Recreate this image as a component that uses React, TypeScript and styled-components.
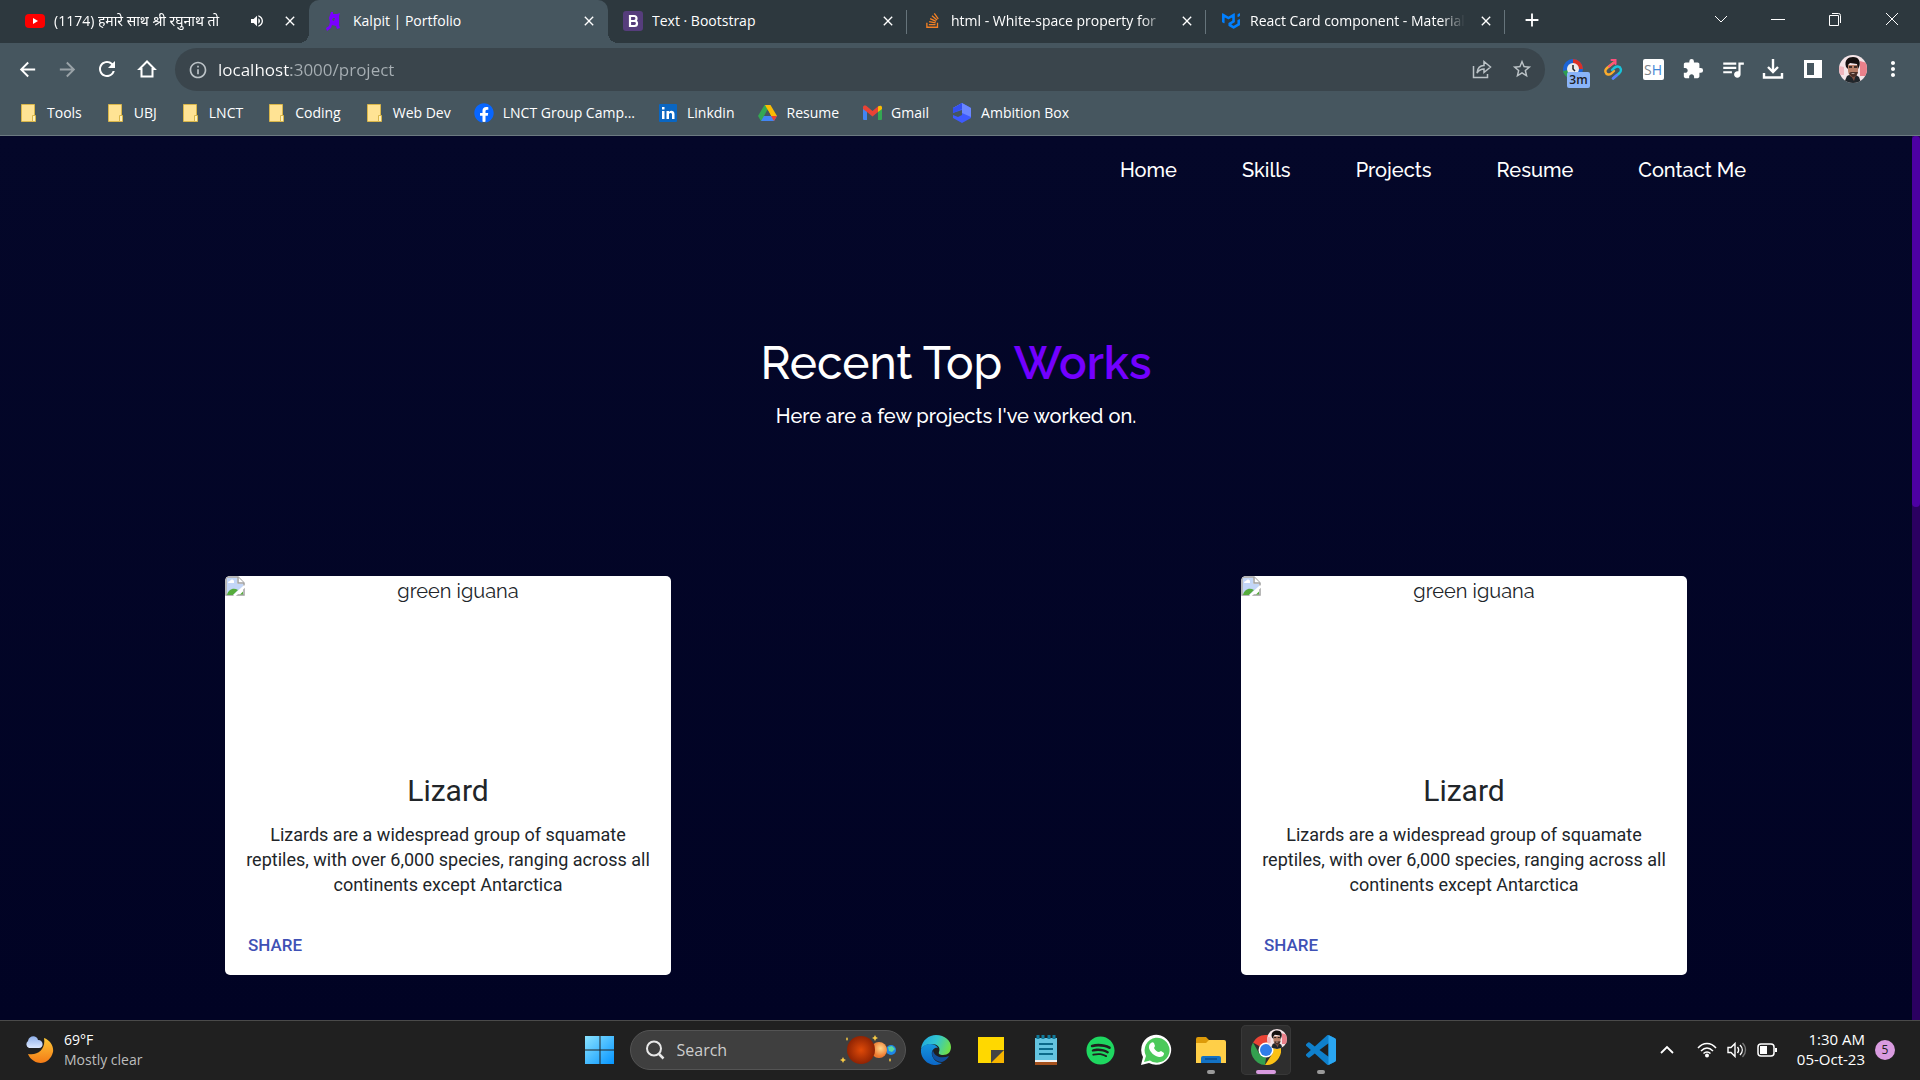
import React from "react";
import styled, { createGlobalStyle, css } from "styled-components";
import {
  MdArrowBack,
  MdArrowForward,
  MdRefresh,
  MdInfoOutline,
  MdStarBorder,
  MdExtension,
  MdQueueMusic,
  MdMoreVert,
  MdClose,
  MdAdd,
  MdVolumeUp,
} from "react-icons/md";
import { FaStackOverflow, FaFacebook, FaSpotify } from "react-icons/fa";
import { SiMui } from "react-icons/si";

const uiFont = `"Segoe UI", "Open Sans", "Noto Sans", sans-serif`;
const siteFont = `Raleway, Lato, "Open Sans", sans-serif`;
const cardFont = `Roboto, "Liberation Sans", sans-serif`;

const GlobalStyle = createGlobalStyle`
  *, *::before, *::after { box-sizing: border-box; }
  body { margin: 0; background: #030627; }
  h1, h2, p { margin: 0; font-weight: 400; }
  button { border: 0; padding: 0; background: none; color: inherit; font: inherit; cursor: pointer; }
  a { color: inherit; text-decoration: none; }
  svg { display: block; flex: none; }
`;

const Screen = styled.div`
  display: flex;
  flex-direction: column;
  height: 100vh;
  overflow: hidden;
  font-family: ${uiFont};
  font-size: 14px;
  color: #fff;
`;

/* ---------- browser chrome ---------- */

const TabStrip = styled.header`
  display: flex;
  height: 43px;
  flex: none;
  padding-left: 10px;
  background: #2d383e;
`;

const Tab = styled.div<{ $active?: boolean; $divider?: boolean }>`
  position: relative;
  display: flex;
  align-items: center;
  flex: 0 1 299px;
  min-width: 0;
  padding: 0 9px 2px 14px;
  ${(p) =>
    p.$divider &&
    css`
      background: linear-gradient(#66747b, #66747b) right center / 1px 24px no-repeat;
    `}
  ${(p) =>
    p.$active &&
    css`
      background: #46565f;
      border-radius: 10px 10px 0 0;
      &::before,
      &::after {
        content: "";
        position: absolute;
        bottom: 0;
        width: 10px;
        height: 10px;
      }
      &::before {
        right: 100%;
        background: radial-gradient(circle at 0 0, transparent 10px, #46565f 10px);
      }
      &::after {
        left: 100%;
        background: radial-gradient(circle at 100% 0, transparent 10px, #46565f 10px);
      }
    `}
`;

const Favicon = styled.span`
  display: grid;
  place-items: center;
  flex: none;
  width: 22px;
  height: 22px;
  margin-right: 8px;
`;

const TabTitle = styled.span<{ $fade?: boolean }>`
  flex: 1;
  min-width: 0;
  overflow: hidden;
  white-space: nowrap;
  line-height: 24px;
  ${(p) =>
    p.$fade &&
    css`
      mask-image: linear-gradient(90deg, #000 calc(100% - 24px), transparent);
    `}
`;

const TabAudio = styled.span`
  display: grid;
  place-items: center;
  width: 24px;
  margin-left: 4px;
`;

const SmallButton = styled.button`
  display: grid;
  place-items: center;
  flex: none;
  width: 20px;
  height: 20px;
  margin-left: 11px;
`;

const NewTab = styled.button`
  display: grid;
  place-items: center;
  width: 40px;
  height: 40px;
  margin-left: 7px;
`;

const WindowControls = styled.div`
  display: flex;
  margin-left: auto;
`;

const WindowButton = styled.button`
  display: grid;
  place-items: center;
  width: 57px;
  height: 37px;
`;

const Toolbar = styled.div`
  display: flex;
  align-items: center;
  flex: none;
  height: 53px;
  padding: 0 7px 0 7px;
  background: #46565f;
`;

const ToolButton = styled.button<{ $dim?: boolean }>`
  position: relative;
  display: grid;
  place-items: center;
  width: 40px;
  height: 40px;
  padding-bottom: 1px;
  opacity: ${(p) => (p.$dim ? 0.45 : 1)};
`;

const Badge = styled.span`
  position: absolute;
  left: 14px;
  top: 22px;
  width: 23px;
  height: 16px;
  border-radius: 2px;
  background: #8ab4f8;
  color: #202124;
  font-size: 12px;
  font-weight: 600;
  line-height: 16px;
  text-align: center;
`;

const Omnibox = styled.div`
  display: flex;
  align-items: center;
  flex: 1;
  height: 43px;
  margin: 0 8px;
  padding: 0 3px 0 13px;
  border-radius: 22px;
  background: #3a454c;
  color: #bcc3c7;
`;

const Address = styled.input`
  flex: 1;
  min-width: 0;
  margin-left: 10px;
  padding: 0;
  border: 0;
  outline: 0;
  color: #fff;
  font: 17px/24px ${uiFont};
  background: linear-gradient(90deg, #fff 73px, #a7afb4 73px);
  background-clip: text;
  -webkit-background-clip: text;
  -webkit-text-fill-color: transparent;
`;

const BookmarkBar = styled.nav`
  display: flex;
  align-items: center;
  gap: 23px;
  flex: none;
  height: 40px;
  padding: 0 18px 5px;
  border-bottom: 1px solid #6c7a81;
  background: #46565f;
`;

const Bookmark = styled.a`
  display: flex;
  align-items: center;
  white-space: nowrap;
  line-height: 20px;
`;

const BookmarkIcon = styled.span`
  display: grid;
  place-items: center;
  width: 20px;
  height: 20px;
  margin-right: 9px;
`;

/* ---------- portfolio page ---------- */

const Viewport = styled.div`
  display: flex;
  flex: 1;
  min-height: 0;
  background: linear-gradient(#040729, #010324);
`;

const Page = styled.main`
  flex: 1;
  min-width: 0;
  overflow: hidden;
  font-family: ${siteFont};
`;

const ScrollTrack = styled.div`
  width: 8px;
  background: #2b0060;
`;

const ScrollThumb = styled.div`
  height: 42%;
  border-radius: 4px;
  background: #4d00a3;
`;

const SiteNav = styled.nav`
  display: flex;
  justify-content: flex-end;
  gap: 65px;
  padding: 18px 166px 0 0;
  font-size: 20px;
  font-weight: 500;
  line-height: 32px;
`;

const Intro = styled.section`
  padding-top: 148px;
  text-align: center;
`;

const Heading = styled.h1`
  font-size: 46px;
  font-weight: 500;
  line-height: 58px;
`;

const Accent = styled.strong`
  color: #7300ff;
  font-weight: 600;
`;

const Subtitle = styled.p`
  margin-top: 9px;
  font-size: 20px;
  font-weight: 500;
  line-height: 30px;
`;

const Cards = styled.section`
  display: flex;
  justify-content: space-between;
  padding: 145px 225px 0;
`;

const Card = styled.article`
  width: 446px;
  border-radius: 5px;
  overflow: hidden;
  background: #fff;
  color: #212529;
  font-family: ${cardFont};
`;

const Media = styled.div`
  display: flex;
  height: 175px;
  font: 20px/30px ${siteFont};
`;

const MediaAlt = styled.span`
  flex: 1;
  text-align: center;
`;

const CardBody = styled.div`
  padding: 20px 20px 0;
  text-align: center;
`;

const CardTitle = styled.h2`
  font-size: 30px;
  line-height: 40px;
`;

const CardText = styled.p`
  margin-top: 11px;
  font-size: 18px;
  line-height: 25px;
`;

const CardActions = styled.div`
  display: flex;
  padding: 30px 17px 12px;
`;

const ShareButton = styled.button`
  height: 36px;
  padding: 0 6px;
  color: #3f51b5;
  font-size: 17px;
  font-weight: 500;
`;

/* ---------- taskbar ---------- */

const Taskbar = styled.footer`
  display: grid;
  grid-template-columns: 1fr auto 1fr;
  align-items: center;
  flex: none;
  height: 60px;
  padding-bottom: 1px;
  border-top: 1px solid #4a4a4a;
  background: #202020;
`;

const Weather = styled.button`
  display: flex;
  align-items: center;
  gap: 10px;
  justify-self: start;
  padding: 0 0 1px 24px;
  text-align: left;
  line-height: 20px;
`;

const Muted = styled.span`
  display: block;
  color: #bdbdbd;
`;

const AppRow = styled.div`
  display: flex;
  align-items: center;
  gap: 5px;
`;

const AppButton = styled.button<{ $active?: boolean }>`
  position: relative;
  display: grid;
  place-items: center;
  width: 50px;
  height: 50px;
  border-radius: 5px;
  ${(p) =>
    p.$active &&
    css`
      background: #2e2e2e;
      box-shadow: inset 0 0 0 1px #383838;
    `}
`;

const RunMark = styled.span<{ $active?: boolean }>`
  position: absolute;
  bottom: 1px;
  left: 50%;
  width: ${(p) => (p.$active ? 20 : 8)}px;
  height: 4px;
  border-radius: 2px;
  background: ${(p) => (p.$active ? "#d99be0" : "#9a9a9a")};
  transform: translateX(-50%);
`;

const AvatarBadge = styled.span`
  position: absolute;
  right: 4px;
  top: 4px;
`;

const SearchBox = styled.label`
  display: flex;
  align-items: center;
  width: 276px;
  height: 40px;
  padding: 0 8px 0 14px;
  border: 1px solid #545454;
  border-radius: 20px;
  background: #3f3f3f;
`;

const SearchInput = styled.input`
  flex: 1;
  min-width: 0;
  margin-left: 12px;
  padding: 0;
  border: 0;
  outline: 0;
  background: none;
  color: #fff;
  font: 16px/24px ${uiFont};
  &::placeholder {
    color: #cdcdcd;
    opacity: 1;
  }
`;

const Tray = styled.div`
  display: flex;
  align-items: center;
  justify-self: end;
  padding-right: 25px;
`;

const TrayIcon = styled.button<{ $wide?: boolean }>`
  display: grid;
  place-items: center;
  width: ${(p) => (p.$wide ? 50 : 30)}px;
  height: 40px;
`;

const Clock = styled.div`
  min-width: 83px;
  padding-bottom: 2px;
  text-align: right;
  font-size: 15px;
  line-height: 20px;
`;

const Count = styled.span`
  width: 20px;
  height: 20px;
  margin-left: 10px;
  border-radius: 50%;
  background: #d99be0;
  color: #202020;
  font-size: 12px;
  line-height: 20px;
  text-align: center;
`;

/* ---------- drawings ---------- */

const YouTubeIcon = () => (
  <svg width="20" height="20" viewBox="0 0 20 20">
    <rect y="3" width="20" height="14" rx="4" fill="#f00" />
    <path d="M8 7v6l5-3z" fill="#fff" />
  </svg>
);
const KalpitIcon = () => (
  <svg width="16" height="20" viewBox="0 0 16 20">
    <path d="M5 1h2v2h4l3-1-1 3v9l1 3-3 1-1-3-4-1-1 3-4 3-1-3 3-2 1-4-1-4z" fill="#7a00ff" />
    <path d="M7 7h2l-1 3-2-1z" fill="#46565f" />
  </svg>
);
const BootstrapIcon = () => (
  <svg width="20" height="20" viewBox="0 0 20 20">
    <rect width="20" height="20" rx="3" fill="#563d7c" />
    <path d="M7 5h4a2 2 0 0 1 0 5H7zM7 10h4.500a2.500 2.500 0 0 1 0 5H7z" fill="none" stroke="#fff" strokeWidth="2.200" />
  </svg>
);
const HomeIcon = () => (
  <svg width="20" height="20" viewBox="0 0 20 20" fill="none" stroke="#fff" strokeWidth="2">
    <path d="M4.500 17.500V10H2.500L10 2.500l7.500 7.500h-2v7.500z" />
  </svg>
);
const ShareIcon = () => (
  <svg width="20" height="20" viewBox="0 0 20 20" fill="none" stroke="#bcc3c7" strokeWidth="1.500">
    <path d="M1.500 7v11.500h14V15M5 14c.5-5 3-7.500 7-7.500V2.500L18.500 8 12 13.500V10c-3 0-5 1-7 4z" />
  </svg>
);
const TimerIcon = () => (
  <svg width="20" height="20" viewBox="0 0 20 20">
    <circle cx="10" cy="10" r="10" fill="#1b64d8" />
    <path d="M10 0a10 10 0 0 1 10 10H10z" fill="#d93025" />
    <path d="M0 12l10-2v10A10 10 0 0 1 0 12z" fill="#2e9e4f" />
    <circle cx="10" cy="10" r="6" fill="#e8eaed" />
    <path d="M10 6v4l2 2" stroke="#222" strokeWidth="1.500" fill="none" />
  </svg>
);
const LoopIcon = () => (
  <svg width="20" height="22" viewBox="0 0 20 22" fill="none" strokeWidth="2.400" strokeLinecap="round">
    <path d="M11 4.500L4 10c-3 2.500-1.500 6 1 6.500 2 .5 3-.5 6-3.500" stroke="#fbab2c" />
    <path d="M6 8.500l5-4M8.500 2h4v4" stroke="#ff4f7d" strokeWidth="2" />
    <path d="M9 12c3-3 4-4 6-3.500 3 .5 4 4 1.500 6.500L10 20.500" stroke="#19c3d9" />
    <path d="M14 17l-4 3.500" stroke="#5b7cff" />
  </svg>
);
const ShIcon = styled.span`
  width: 21px;
  height: 21px;
  border-radius: 2px;
  background: #fff;
  color: #80868b;
  font-size: 14px;
  line-height: 21px;
  text-align: center;
  b {
    color: #3f87d6;
    font-weight: 400;
  }
`;
const DownloadIcon = () => (
  <svg width="22" height="22" viewBox="0 0 22 22" fill="none" stroke="#fff" strokeWidth="2.400">
    <path d="M11 1v12M6 9l5 5 5-5M2 15v4.500h18V15" />
  </svg>
);
const PanelIcon = () => (
  <svg width="18" height="18" viewBox="0 0 18 18">
    <path d="M0 0h18v18H0zM3 3v12h7V3z" fill="#fff" fillRule="evenodd" />
  </svg>
);
const Avatar = ({ size }: { size: number }) => (
  <svg width={size} height={size} viewBox="0 0 28 28">
    <defs>
      <clipPath id={`face${size}`}>
        <circle cx="14" cy="14" r="14" />
      </clipPath>
    </defs>
    <g clipPath={`url(#face${size})`}>
      <path d="M0 0h28v28H0z" fill="#f4e4e7" />
      <path d="M21 6l7 2v13h-7z" fill="#ea808a" />
      <path d="M0 11l5 1v8H0z" fill="#f0b6bd" />
      <path d="M5 28l3-7 6-3 6 4 2 6z" fill="#20262b" />
      <path d="M11 19h6l-2 7z" fill="#7e5040" />
      <path d="M9 10h10v5c0 4-2 7-5 7s-5-3-5-7z" fill="#b98068" />
      <path d="M7 12C5 5 9 2 14 2c6 0 8 5 6 10l-1 2-1-5-7-1-2 2v4z" fill="#15100f" />
      <path d="M10 18l2-1h5l2 0c-1 3-2 5-5 5-2 0-3-2-4-4z" fill="#4a3028" />
      <path d="M12 18c1 1 3 1 4 0z" fill="#f3e3dc" />
      <path d="M10 12h3m2 0h3" stroke="#1b1413" strokeWidth="1.300" />
    </g>
  </svg>
);
const FolderIcon = () => (
  <svg width="16" height="20" viewBox="0 0 16 20">
    <path d="M1.500 1.500h13v17h-13z" fill="#ffe394" stroke="#d9b64a" />
    <path d="M12.500 12.500h3v6h-3z" fill="#fff0b8" stroke="#d9b64a" />
  </svg>
);
const FacebookIcon = () => (
  <svg width="20" height="20" viewBox="0 0 20 20">
    <circle cx="10" cy="10" r="9" fill="#fff" />
    <FaFacebook size={20} color="#0866ff" />
  </svg>
);
const LinkedInIcon = () => (
  <svg width="18" height="18" viewBox="0 0 18 18">
    <rect width="18" height="18" rx="1" fill="#0a66c2" />
    <path d="M3 7h2.500v8H3zM3 3h2.500v2.500H3zM7.500 7H10v1c1.500-2 5.500-1.500 5.500 2v5H13v-4.500c0-2-3-2-3 0V15H7.500z" fill="#fff" />
  </svg>
);
const DriveIcon = () => (
  <svg width="19" height="18" viewBox="0 0 19 18">
    <path d="M6.500 1h3l2.500 4.500L4 17H3l-3-5z" fill="#34a853" />
    <path d="M7 1h5.500L19 12h-6z" fill="#fbbc04" />
    <path d="M9.500 5.500L13 12H6z" fill="#46565f" />
    <path d="M6 12h13l-3 5H3z" fill="#4285f4" />
    <path d="M13 12h6l-3 5z" fill="#ea4335" />
  </svg>
);
const GmailIcon = () => (
  <svg width="19" height="16" viewBox="0 0 19 16">
    <path d="M0 3h4v12H1a1 1 0 0 1-1-1z" fill="#4285f4" />
    <path d="M15 3h4v11a1 1 0 0 1-1 1h-3z" fill="#34a853" />
    <path d="M0 2.500C0 .5 2 0 3.500 1l6 5 6-5L15 7l-5.500 4.500L4 7 0 4z" fill="#ea4335" />
    <path d="M15 1.500C17 0 19 .5 19 2.500V4l-4 3z" fill="#fbbc04" />
  </svg>
);
const AmbitionIcon = () => (
  <svg width="18" height="20" viewBox="0 0 18 20">
    <path d="M9 0l9 5v10l-9 5-9-5v-3l5 2 4-2V7L0 10V5z" fill="#3d5afe" />
    <path d="M9 0l9 5v9l-9-4V6L0 9V5z" fill="#6a86ff" />
    <path d="M0 5l9-5v6L0 10z" fill="#3450f0" />
  </svg>
);
const BrokenImage = () => (
  <svg width="20" height="20" viewBox="0 0 20 20">
    <path d="M1 1h12l6 6v12H1z" fill="#fff" stroke="#a0a0a0" strokeWidth="1.500" />
    <path d="M2 2h10v6h6v3l-8 8H2z" fill="#c3d6f7" />
    <path d="M13 1v6h6" fill="#fff" stroke="#a0a0a0" strokeWidth="1.500" />
    <path d="M3 7a2 2 0 0 1 2-2 2 2 0 0 1 4 1v1z" fill="#fff" />
    <path d="M2 19c1-5 6-8 11-5l-5 5zM15 18.500l3-3v3z" fill="#56ac3c" />
    <path d="M9 20L20 10" stroke="#fff" strokeWidth="2.500" />
  </svg>
);
const WeatherIcon = () => (
  <svg width="30" height="30" viewBox="0 0 30 30">
    <defs>
      <linearGradient id="moon" x2="0" y2="1">
        <stop stopColor="#fcc737" />
        <stop offset="1" stopColor="#f47b16" />
      </linearGradient>
      <linearGradient id="cloud" x2="0" y2="1">
        <stop stopColor="#8fb0ea" />
        <stop offset="1" stopColor="#dce8ff" />
      </linearGradient>
    </defs>
    <path d="M20 3c6 2 10 8 9 14-2 9-11 14-19 9-3-2-5-4-6-7 10 2 18-5 16-16z" fill="url(#moon)" />
    <path d="M5 13a4 4 0 0 1-1-7c1-6 9-6 10-1 6 0 6 8 1 8z" fill="url(#cloud)" />
  </svg>
);
const WindowsIcon = () => (
  <svg width="30" height="30" viewBox="0 0 30 30">
    <defs>
      <linearGradient id="win" x2="1" y2="1">
        <stop stopColor="#8be3ff" />
        <stop offset="1" stopColor="#0595ff" />
      </linearGradient>
    </defs>
    <path d="M0 1h14.500v13.500H0zM15.500 1H29v13.500H15.500zM0 15.500h14.500V29H0zM15.500 15.500H29V29H15.500z" fill="url(#win)" />
  </svg>
);
const PlanetsIcon = () => (
  <svg width="58" height="30" viewBox="0 0 58 30">
    <defs>
      <radialGradient id="mars">
        <stop stopColor="#e04a08" />
        <stop offset="1" stopColor="#8f2303" />
      </radialGradient>
      <radialGradient id="venus" cx="0.6" cy="0.4">
        <stop stopColor="#ffd68a" />
        <stop offset="1" stopColor="#ee7a30" />
      </radialGradient>
    </defs>
    <circle cx="52" cy="15" r="5" fill="#1d87e8" />
    <path d="M49 12l4-1 3 3-3 3-3-1z" fill="#5bd8a0" />
    <circle cx="40" cy="15" r="8" fill="url(#venus)" />
    <circle cx="22" cy="15" r="14" fill="url(#mars)" />
    <path
      d="M4 22l1 2 2 1-2 1-1 2-1-2-2-1 2-1zM36 0l1 2 2 1-2 1-1 2-1-2-2-1 2-1zM8 2l1 2-1 2-1-2zM51 23l1 2-1 2-1-2z"
      fill="#f6c945"
    />
  </svg>
);
const EdgeIcon = () => (
  <svg width="30" height="30" viewBox="0 0 30 30">
    <defs>
      <linearGradient id="edgeTop" x1="0" x2="1" y1="0.2" y2="0.5">
        <stop stopColor="#1fa7e0" />
        <stop offset="0.5" stopColor="#32c6cf" />
        <stop offset="1" stopColor="#6fe04a" />
      </linearGradient>
      <linearGradient id="edgeLow" x2="0" y2="1">
        <stop stopColor="#1595dd" />
        <stop offset="1" stopColor="#0b67c8" />
      </linearGradient>
    </defs>
    <path d="M0 14C1 5 8 0 15 0c9 0 15 6 15 12 0 5-3 8-8 8-3 0-5-1-4-3 2-5-2-8-7-8C6 9 2 11 0 14z" fill="url(#edgeTop)" />
    <path d="M0 14c3-6 14-7 17-1-4-1-7 3-6 7 1 5 6 8 10 8-3 2-6 2-8 2C5 29-1 22 0 14z" fill="url(#edgeLow)" />
    <path d="M12 15c-3 6 2 12 9 12 3-1 6-4 7-6-7 3-15 1-16-6z" fill="#114f9c" />
  </svg>
);
const StickyIcon = () => (
  <svg width="28" height="28" viewBox="0 0 28 28">
    <path d="M1 1h26v13l-12 13H1z" fill="#ffd800" />
    <path d="M27 14v13H14z" fill="#f7b500" />
    <path d="M14 14h13L14 27z" fill="#444" />
  </svg>
);
const NotepadIcon = () => (
  <svg width="24" height="30" viewBox="0 0 24 30">
    <path d="M1 26h22v4H1z" fill="#a4511d" />
    <path d="M1 24h22v3H1z" fill="#f2f2f2" />
    <path d="M1 3h22v22H1z" fill="#64c4e0" />
    <path d="M4 0v4M9 0v4M15 0v4M20 0v4" stroke="#107a9b" strokeWidth="3" />
    <path d="M5 9h14M5 14h14M5 19h14" stroke="#0b6a8a" strokeWidth="2" />
  </svg>
);
const WhatsAppIcon = () => (
  <svg width="32" height="32" viewBox="0 0 32 32">
    <path d="M1 31l2-8A15 15 0 1 1 9 29z" fill="#fff" />
    <path d="M4 28l2-6A12.500 12.500 0 1 1 10 26.500z" fill="#4bc95a" />
    <path d="M11 9c1-1 2-1 3 0l1 3-1 2c1 2 3 4 5 4l2-1 3 2c0 3-2 4-5 4-5-1-9-5-10-9 0-2 0-4 2-5z" fill="#fff" />
  </svg>
);
const ExplorerIcon = () => (
  <svg width="30" height="28" viewBox="0 0 30 28">
    <path d="M0 3a2 2 0 0 1 2-2h8l3 3h15v8H0z" fill="#dd9a09" />
    <path d="M0 7h10l3-3h15a2 2 0 0 1 2 2v21H0z" fill="#ffcf48" />
    <path d="M5 27v-5a2 2 0 0 1 2-2h16a2 2 0 0 1 2 2v5z" fill="#1372c4" />
    <path d="M9 23h12" stroke="#0b4c8c" strokeWidth="1.500" />
  </svg>
);
const ChromeIcon = () => (
  <svg width="30" height="30" viewBox="0 0 30 30">
    <path d="M15 15L2 7.500A15 15 0 0 1 28 7.500z" fill="#ea4335" />
    <path d="M2 7.500L8.500 19l6.500 4-1 7A15 15 0 0 1 2 7.500z" fill="#34a04f" />
    <path d="M28 7.500A15 15 0 0 1 14 30l7.500-11.500V12L15 7.500z" fill="#fbc116" />
    <circle cx="15" cy="15" r="7.500" fill="#fff" />
    <circle cx="15" cy="15" r="6" fill="#2f7de9" />
  </svg>
);
const CodeIcon = () => (
  <svg width="30" height="30" viewBox="0 0 24 24">
    <path
      d="M23.150 2.587L18.210.21a1.494 1.494 0 0 0-1.705.29l-9.460 8.630-4.120-3.128a.999.999 0 0 0-1.276.057L.327 7.261A1 1 0 0 0 .326 8.740L3.899 12 .326 15.260a1 1 0 0 0 .001 1.479L1.650 17.940a.999.999 0 0 0 1.276.057l4.120-3.128 9.460 8.630a1.492 1.492 0 0 0 1.704.290l4.942-2.377A1.500 1.500 0 0 0 24 20.060V3.939a1.500 1.500 0 0 0-.85-1.352zm-5.146 14.861L10.826 12l7.178-5.448v10.896z"
      fill="#0f80cc"
    />
    <path d="M18 0l5.150 2.587A1.500 1.500 0 0 1 24 3.939V20.060a1.500 1.500 0 0 1-.85 1.352L18 24z" fill="#2aa6f2" />
  </svg>
);
const ChevronUp = () => (
  <svg width="14" height="10" viewBox="0 0 14 10" fill="none" stroke="#fff" strokeWidth="1.800">
    <path d="M1 8l6-6 6 6" />
  </svg>
);
const WifiIcon = () => (
  <svg width="20" height="16" viewBox="0 0 20 16" fill="none" stroke="#fff" strokeWidth="1.500">
    <path d="M1 6c5-6 13-6 18 0M4 9c4-4 8-4 12 0M6.500 11.500c2-2 5-2 7 0" />
    <circle cx="10" cy="13.500" r="2" fill="#fff" stroke="none" />
  </svg>
);
const SpeakerIcon = () => (
  <svg width="20" height="16" viewBox="0 0 20 16" fill="none" stroke="#fff" strokeWidth="1.400">
    <path d="M1 5.500h3L8 1.500v13l-4-4H1zM10.500 5c1.500 2 1.500 4 0 6M13 3c3 3 3 7 0 10" />
    <path d="M15.500 1c4 4 4 10 0 14" stroke="#777" />
  </svg>
);
const BatteryIcon = () => (
  <svg width="20" height="14" viewBox="0 0 20 14" fill="none" stroke="#fff" strokeWidth="1.500">
    <rect x="1" y="1" width="16" height="12" rx="3" />
    <path d="M3 3h7v8H3zM18 5h2v4h-2z" fill="#fff" stroke="none" />
  </svg>
);
const Line = ({ d, size = 14 }: { d: string; size?: number }) => (
  <svg width={size} height={size} viewBox="0 0 14 14" fill="none" stroke="#fff" strokeWidth="1">
    <path d={d} />
  </svg>
);

/* ---------- data ---------- */

const tabs = [
  { title: "(1174) हमारे साथ श्री रघुनाथ तो", icon: <YouTubeIcon />, audio: true, fade: true },
  { title: "Kalpit | Portfolio", icon: <KalpitIcon />, active: true },
  { title: "Text · Bootstrap", icon: <BootstrapIcon />, divider: true },
  { title: "html - White-space property for", icon: <FaStackOverflow size={17} color="#f48024" />, divider: true, fade: true },
  { title: "React Card component - Material", icon: <SiMui size={18} color="#007fff" />, divider: true, fade: true },
];

const bookmarks = [
  { label: "Tools", icon: <FolderIcon /> },
  { label: "UBJ", icon: <FolderIcon /> },
  { label: "LNCT", icon: <FolderIcon /> },
  { label: "Coding", icon: <FolderIcon /> },
  { label: "Web Dev", icon: <FolderIcon /> },
  { label: "LNCT Group Camp...", icon: <FacebookIcon /> },
  { label: "Linkdin", icon: <LinkedInIcon /> },
  { label: "Resume", icon: <DriveIcon /> },
  { label: "Gmail", icon: <GmailIcon /> },
  { label: "Ambition Box", icon: <AmbitionIcon /> },
];

const extensions = [
  { name: "Timer", icon: <TimerIcon />, badge: "3m" },
  { name: "Loop", icon: <LoopIcon /> },
  { name: "SH", icon: <ShIcon>S<b>H</b></ShIcon> },
  { name: "Extensions", icon: <MdExtension size={22} /> },
  { name: "Media", icon: <MdQueueMusic size={26} /> },
  { name: "Downloads", icon: <DownloadIcon /> },
  { name: "Side panel", icon: <PanelIcon /> },
  { name: "Profile", icon: <Avatar size={28} /> },
  { name: "Menu", icon: <MdMoreVert size={24} /> },
];

const apps = [
  { name: "Edge", icon: <EdgeIcon /> },
  { name: "Sticky Notes", icon: <StickyIcon /> },
  { name: "Notepad", icon: <NotepadIcon /> },
  { name: "Spotify", icon: <FaSpotify size={29} color="#1ed760" /> },
  { name: "WhatsApp", icon: <WhatsAppIcon /> },
  { name: "File Explorer", icon: <ExplorerIcon />, running: true },
  { name: "Chrome", icon: <ChromeIcon />, running: true, active: true },
  { name: "Visual Studio Code", icon: <CodeIcon />, running: true },
];

const projects = [1, 2];

function ProjectCard() {
  return (
    <Card>
      <Media role="img" aria-label="green iguana">
        <BrokenImage />
        <MediaAlt>green iguana</MediaAlt>
      </Media>
      <CardBody>
        <CardTitle>Lizard</CardTitle>
        <CardText>
          Lizards are a widespread group of squamate reptiles, with over 6,000 species, ranging across all continents
          except Antarctica
        </CardText>
      </CardBody>
      <CardActions>
        <ShareButton>SHARE</ShareButton>
      </CardActions>
    </Card>
  );
}

export default function App() {
  return (
    <Screen>
      <GlobalStyle />
      <TabStrip>
        {tabs.map((t) => (
          <Tab key={t.title} $active={t.active} $divider={t.divider}>
            <Favicon>{t.icon}</Favicon>
            <TabTitle $fade={t.fade}>{t.title}</TabTitle>
            {t.audio && (
              <TabAudio>
                <MdVolumeUp size={16} />
              </TabAudio>
            )}
            <SmallButton aria-label="Close tab">
              <MdClose size={16} />
            </SmallButton>
          </Tab>
        ))}
        <NewTab aria-label="New tab">
          <MdAdd size={22} />
        </NewTab>
        <WindowControls>
          <WindowButton aria-label="Search tabs">
            <Line d="M1 4l6 6 6-6" />
          </WindowButton>
          <WindowButton aria-label="Minimize">
            <Line d="M0 7.500h14" />
          </WindowButton>
          <WindowButton aria-label="Restore">
            <Line d="M1.500 3.500h9v10h-9zM4 1.500h6.500a2 2 0 0 1 2 2V11" />
          </WindowButton>
          <WindowButton aria-label="Close">
            <Line d="M1 1l12 12M13 1L1 13" />
          </WindowButton>
        </WindowControls>
      </TabStrip>

      <Toolbar>
        <ToolButton aria-label="Back">
          <MdArrowBack size={23} />
        </ToolButton>
        <ToolButton aria-label="Forward" $dim>
          <MdArrowForward size={23} />
        </ToolButton>
        <ToolButton aria-label="Reload">
          <MdRefresh size={24} />
        </ToolButton>
        <ToolButton aria-label="Home">
          <HomeIcon />
        </ToolButton>
        <Omnibox>
          <MdInfoOutline size={20} />
          <Address aria-label="Address" defaultValue="localhost:3000/project" />
          <ToolButton aria-label="Share page">
            <ShareIcon />
          </ToolButton>
          <ToolButton aria-label="Bookmark page">
            <MdStarBorder size={22} />
          </ToolButton>
        </Omnibox>
        {extensions.map((e) => (
          <ToolButton key={e.name} aria-label={e.name}>
            {e.icon}
            {e.badge && <Badge>{e.badge}</Badge>}
          </ToolButton>
        ))}
      </Toolbar>

      <BookmarkBar aria-label="Bookmarks">
        {bookmarks.map((b) => (
          <Bookmark key={b.label} href="#">
            <BookmarkIcon>{b.icon}</BookmarkIcon>
            {b.label}
          </Bookmark>
        ))}
      </BookmarkBar>

      <Viewport>
        <Page>
          <SiteNav>
            {["Home", "Skills", "Projects", "Resume", "Contact Me"].map((n) => (
              <a key={n} href="#">
                {n}
              </a>
            ))}
          </SiteNav>
          <Intro>
            <Heading>
              Recent Top <Accent>Works</Accent>
            </Heading>
            <Subtitle>Here are a few projects I've worked on.</Subtitle>
          </Intro>
          <Cards>
            {projects.map((id) => (
              <ProjectCard key={id} />
            ))}
          </Cards>
        </Page>
        <ScrollTrack>
          <ScrollThumb />
        </ScrollTrack>
      </Viewport>

      <Taskbar>
        <Weather>
          <WeatherIcon />
          <span>
            69°F
            <Muted>Mostly clear</Muted>
          </span>
        </Weather>
        <AppRow>
          <AppButton aria-label="Start">
            <WindowsIcon />
          </AppButton>
          <SearchBox>
            <svg width="20" height="20" viewBox="0 0 20 20" fill="none" stroke="#e8e8e8" strokeWidth="2">
              <circle cx="9" cy="8.500" r="7" />
              <path d="M14 14l4.500 4.500" strokeWidth="2.500" />
            </svg>
            <SearchInput aria-label="Search" placeholder="Search" />
            <PlanetsIcon />
          </SearchBox>
          {apps.map((a) => (
            <AppButton key={a.name} aria-label={a.name} $active={a.active}>
              {a.icon}
              {a.active && (
                <AvatarBadge>
                  <Avatar size={20} />
                </AvatarBadge>
              )}
              {a.running && <RunMark $active={a.active} />}
            </AppButton>
          ))}
        </AppRow>
        <Tray>
          <TrayIcon aria-label="Show hidden icons" $wide>
            <ChevronUp />
          </TrayIcon>
          <TrayIcon aria-label="Network">
            <WifiIcon />
          </TrayIcon>
          <TrayIcon aria-label="Volume">
            <SpeakerIcon />
          </TrayIcon>
          <TrayIcon aria-label="Battery">
            <BatteryIcon />
          </TrayIcon>
          <Clock>
            1:30 AM
            <br />
            05-Oct-23
          </Clock>
          <Count>5</Count>
        </Tray>
      </Taskbar>
    </Screen>
  );
}
